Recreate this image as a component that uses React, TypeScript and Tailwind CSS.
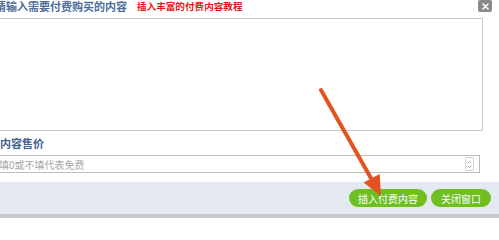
import React from 'react';

const PaidContentDialog = () => {
  return (
    <div
      className="relative w-[499px] h-[218px] overflow-hidden bg-white"
      style={{ fontFamily: '"Noto Sans CJK SC", "Liberation Sans", sans-serif' }}
    >
      {/* Title row */}
      <div className="flex h-[18px] items-start -ml-[5px] pr-[7px]">
        <span className="text-[11px] leading-[13px] font-bold text-[#4d6a99]">请输入需要付费购买的内容</span>
        <span className="ml-[10px] text-[9.6px] leading-[13px] font-bold text-[#e8141b]">插入丰富的付费内容教程</span>
        <button className="ml-auto flex h-[12px] w-[14px] items-center justify-center rounded-[2px] bg-[#8a8a8a]">
          <svg width="7" height="7" viewBox="0 0 7 7" stroke="#ffffff" strokeWidth="1.6" strokeLinecap="round">
            <path d="M1 1 L6 6 M6 1 L1 6" />
          </svg>
        </button>
      </div>

      {/* Editor */}
      <div className="-ml-[4px] mr-[16px] h-[113px] border border-[#c9c9c9] bg-white" />

      {/* Price label */}
      <div className="flex h-[24px] items-center">
        <span className="text-[11px] font-bold text-[#3f5e92]">内容售价</span>
      </div>

      {/* Price input */}
      <div className="-ml-[4px] mr-[19px] flex h-[18px] items-center border border-[#bdbdbd] bg-white pr-[5px]">
        <span className="ml-[2px] text-[10px] text-[#a8a8a8]">填0或不填代表免费</span>
        <div className="ml-auto flex h-[14px] w-[9px] flex-col items-center justify-center rounded-[2px] border border-[#cfcfcf]">
          <svg width="5" height="9" viewBox="0 0 5 9" fill="none" stroke="#9a9a9a" strokeWidth="0.9">
            <path d="M0.8 3.2 L2.5 1.4 L4.2 3.2" />
            <path d="M0.8 5.8 L2.5 7.6 L4.2 5.8" />
          </svg>
        </div>
      </div>

      {/* Footer */}
      <div className="mt-[9px] flex h-[32px] items-center justify-end gap-[4px] bg-[#e4e8f0] pr-[8px]">
        <button className="flex h-[18px] w-[78px] items-center justify-center rounded-full bg-[#6ebf1f] text-[10px] text-white">
          插入付费内容
        </button>
        <button className="flex h-[18px] w-[60px] items-center justify-center rounded-full bg-[#6ebf1f] text-[10px] text-white">
          关闭窗口
        </button>
      </div>
      <div className="h-[4px] bg-[#c6c8cc]" />

      {/* Annotation arrow */}
      <svg className="pointer-events-none absolute left-0 top-0" width="499" height="218" viewBox="0 0 499 218">
        <line x1="321" y1="90" x2="372" y2="180" stroke="#e2531f" strokeWidth="4" strokeLinecap="round" />
        <polygon points="381,196 363.5,182.5 379.7,174" fill="#e2531f" />
      </svg>
    </div>
  );
};

export default function App() {
  return <PaidContentDialog />;
}
